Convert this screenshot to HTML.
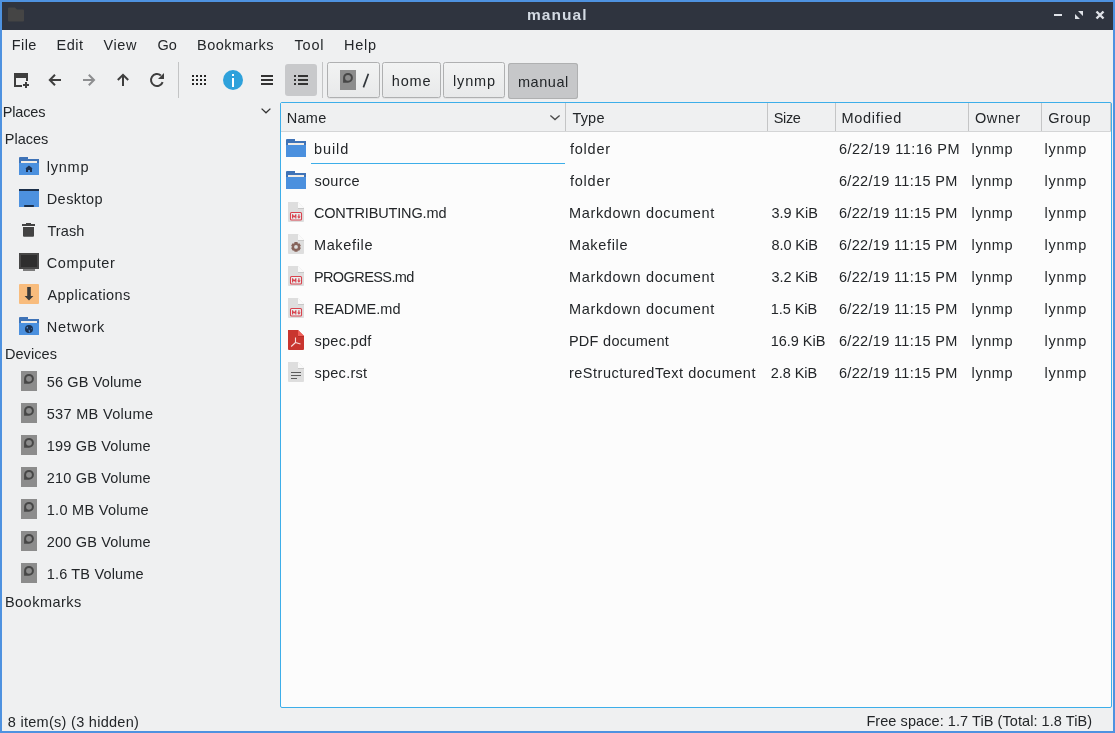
<!DOCTYPE html>
<html><head><meta charset="utf-8">
<style>
html,body{margin:0;padding:0;width:1115px;height:733px;overflow:hidden;background:#4e92e0}
body{position:relative;font-family:"Liberation Sans",sans-serif;font-size:14.5px}
.a{position:absolute}
.t{position:absolute;white-space:pre;line-height:20px;height:20px;font-family:"Liberation Sans",sans-serif;font-size:14.5px}
svg{position:absolute;overflow:visible}
</style></head><body>
<!-- window -->
<div class="a" style="left:2px;top:2px;width:1111px;height:28px;background:#2f343f"></div>
<div class="a" style="left:2px;top:30px;width:1111px;height:701px;background:#eff0f1"></div>
<!-- toolbar separators -->
<div class="a" style="left:178px;top:62px;width:1px;height:36px;background:#c3c4c5"></div>
<div class="a" style="left:322px;top:62px;width:1px;height:36px;background:#c3c4c5"></div>
<!-- checked view button -->
<div class="a" style="left:285px;top:64px;width:32px;height:32px;background:#c8c9cb;border-radius:3px"></div>
<!-- breadcrumb buttons -->
<div class="a bc" style="left:327px;top:62px;width:51px;height:34px"></div>
<div class="a bc" style="left:382px;top:62px;width:57px;height:34px"></div>
<div class="a bc" style="left:443px;top:62px;width:60px;height:34px"></div>
<div class="a" style="left:508px;top:63px;width:70px;height:36px;background:#c6c7c9;border-radius:3px;box-shadow:inset 0 0 0 1px #afb0b1"></div>
<style>.bc{background:linear-gradient(#f2f3f3,#e8e9ea);border:1px solid #afb0b1;border-radius:2.5px;box-shadow:0 1px 0 rgba(0,0,0,0.05)}</style>
<!-- file view frame -->
<div class="a" style="left:280px;top:102px;width:830px;height:604px;border:1px solid #3daee9;border-radius:2px;background:#fcfcfc"></div>
<div class="a" style="left:281px;top:103px;width:830px;height:28px;background:#eff0f1;border-bottom:1px solid #d4d5d6"></div>
<div class="a" style="left:565px;top:103px;width:1px;height:28px;background:#c4c5c6"></div>
<div class="a" style="left:767px;top:103px;width:1px;height:28px;background:#c4c5c6"></div>
<div class="a" style="left:835px;top:103px;width:1px;height:28px;background:#c4c5c6"></div>
<div class="a" style="left:968px;top:103px;width:1px;height:28px;background:#c4c5c6"></div>
<div class="a" style="left:1041px;top:103px;width:1px;height:28px;background:#c4c5c6"></div>
<div class="a" style="left:1110px;top:103px;width:1px;height:28px;background:#c4c5c6"></div>
<!-- focus underline -->
<div class="a" style="left:311px;top:163px;width:254px;height:1px;background:#3daee9"></div>
<svg style="left:0;top:0" width="1115" height="733" viewBox="0 0 1115 733">
<path d="M8 8.5a1 1 0 0 1 1-1h6l2 2h6a1 1 0 0 1 1 1v10a1 1 0 0 1-1 1H9a1 1 0 0 1-1-1z" fill="#454545"/>
<rect x="1054" y="14" width="8" height="2" fill="#dfe2e8"/>
<path d="M1078 11h5v5z M1075 14v5h5z" fill="#dfe2e8"/>
<path d="M1096.5 11.5l7 7 M1103.5 11.5l-7 7" stroke="#dfe2e8" stroke-width="2.4"/>
<path d="M14 73h14v8h-2v-3h-10v7h6v2h-8z" fill="#3e3e3e"/>
<path d="M23 84h6v2h-6z M25 82h2v6h-2z" fill="#3e3e3e"/>
<path d="M55 74.8l-5.2 5.2 5.2 5.2 M50.5 80H61" stroke="#3e3e3e" stroke-width="2" fill="none"/>
<path d="M88.8 74.8l5.2 5.2 -5.2 5.2 M83 80h10.5" stroke="#8d8e90" stroke-width="2" fill="none"/>
<path d="M117.8 80l5.2 -5.2 5.2 5.2 M123 75.5V86" stroke="#3e3e3e" stroke-width="2" fill="none"/>
<path d="M160.86 75.4A6 6 0 1 0 162.64 82.05" stroke="#3e3e3e" stroke-width="2" fill="none"/>
<path d="M164 73v6h-6z" fill="#3e3e3e"/>
<path d="M192 75h2v2h-2zM192 79h2v2h-2zM192 83h2v2h-2zM196 75h2v2h-2zM196 79h2v2h-2zM196 83h2v2h-2zM200 75h2v2h-2zM200 79h2v2h-2zM200 83h2v2h-2zM204 75h2v2h-2zM204 79h2v2h-2zM204 83h2v2h-2z" fill="#252525"/>
<circle cx="233" cy="80" r="10" fill="#2ea1db"/>
<path d="M232 74h2v2h-2z M232 78h2v9h-2z" fill="#fff"/>
<path d="M261 75h12v2h-12z M261 79h12v2h-12z M261 83h12v2h-12z" fill="#333"/>
<path d="M294 75h2v2h-2z M294 79h2v2h-2z M294 83h2v2h-2z M298 75h10v2h-10z M298 79h10v2h-10z M298 83h10v2h-10z" fill="#333"/>
<rect x="340" y="70" width="16" height="20" fill="#8c8c8c"/>
<path d="M343.10 82.70V77.8A4.9 4.9 0 1 1 348 82.70Z M350.9 77.8A2.9 2.9 0 1 0 345.1 77.8A2.9 2.9 0 1 0 350.9 77.8Z" fill="#474747" fill-rule="evenodd"/>
<path d="M368.4 73.8L363.4 87.4" stroke="#31363b" stroke-width="1.7"/>
<path d="M261.6 108.6l4.4 4.2 4.4-4.2" stroke="#333" stroke-width="1.3" fill="none"/>
<path d="M550.4 115.4l4.6 4.2 4.6-4.2" stroke="#4a4a4a" stroke-width="1.3" fill="none"/>
<path d="M19 158a1 1 0 0 1 1-1h8v2h11v6h-20z" fill="#3f73b7"/>
<rect x="21" y="161" width="16" height="2" fill="#f1ece6"/>
<rect x="19" y="163" width="20" height="12" fill="#4b90de"/>
<path d="M25.3 168.5L29 165.5L32.7 168.5H32V172H30V170H28V172H26V168.5Z" fill="#1c3252"/>
<rect x="19" y="189" width="20" height="18" fill="#4d91df"/><rect x="19" y="189" width="20" height="2" fill="#1b2f4a"/><rect x="24" y="205" width="10" height="2" rx="0.8" fill="#1b2f4a"/>
<rect x="26" y="223" width="5" height="1.5" fill="#434343"/><rect x="22" y="224" width="13" height="2" fill="#434343"/><path d="M23 227h11v8.7a1 1 0 0 1 -1 1h-9a1 1 0 0 1 -1 -1z" fill="#434343"/>
<rect x="19" y="253" width="20" height="16" fill="#474747"/><rect x="21" y="255" width="16" height="12" fill="#2e2e2e"/><rect x="23" y="269" width="12" height="2" fill="#7b7b7b"/>
<rect x="19" y="284" width="20" height="20" rx="1" fill="#f8bc7d"/><rect x="27.2" y="287" width="3.6" height="9.5" fill="#3b3b3b"/><path d="M24.6 296h8.8l-4.4 4.6z" fill="#3b3b3b"/>
<path d="M19 318a1 1 0 0 1 1-1h8v2h11v6h-20z" fill="#3f73b7"/>
<rect x="21" y="321" width="16" height="2" fill="#f1ece6"/>
<rect x="19" y="323" width="20" height="12" fill="#4b90de"/>
<circle cx="29" cy="329" r="4" fill="#1c3252"/>
<path d="M27 326.5q1.5 0.5 1 2q-1 0.3 -1.5 -0.5z M28.7 329.5q1.2 0 1.3 1.5l-0.5 1.8q-1.2 -1 -0.8 -3.3z M31.3 327.7q0.8 0.6 0.7 1.6l-0.8 -0.4z" fill="#4d8fd8"/>
<rect x="21" y="371" width="16" height="20" fill="#8c8c8c"/>
<path d="M24.10 383.70V378.8A4.9 4.9 0 1 1 29 383.70Z M31.9 378.8A2.9 2.9 0 1 0 26.1 378.8A2.9 2.9 0 1 0 31.9 378.8Z" fill="#474747" fill-rule="evenodd"/>
<rect x="21" y="403" width="16" height="20" fill="#8c8c8c"/>
<path d="M24.10 415.70V410.8A4.9 4.9 0 1 1 29 415.70Z M31.9 410.8A2.9 2.9 0 1 0 26.1 410.8A2.9 2.9 0 1 0 31.9 410.8Z" fill="#474747" fill-rule="evenodd"/>
<rect x="21" y="435" width="16" height="20" fill="#8c8c8c"/>
<path d="M24.10 447.70V442.8A4.9 4.9 0 1 1 29 447.70Z M31.9 442.8A2.9 2.9 0 1 0 26.1 442.8A2.9 2.9 0 1 0 31.9 442.8Z" fill="#474747" fill-rule="evenodd"/>
<rect x="21" y="467" width="16" height="20" fill="#8c8c8c"/>
<path d="M24.10 479.70V474.8A4.9 4.9 0 1 1 29 479.70Z M31.9 474.8A2.9 2.9 0 1 0 26.1 474.8A2.9 2.9 0 1 0 31.9 474.8Z" fill="#474747" fill-rule="evenodd"/>
<rect x="21" y="499" width="16" height="20" fill="#8c8c8c"/>
<path d="M24.10 511.70V506.8A4.9 4.9 0 1 1 29 511.70Z M31.9 506.8A2.9 2.9 0 1 0 26.1 506.8A2.9 2.9 0 1 0 31.9 506.8Z" fill="#474747" fill-rule="evenodd"/>
<rect x="21" y="531" width="16" height="20" fill="#8c8c8c"/>
<path d="M24.10 543.70V538.8A4.9 4.9 0 1 1 29 543.70Z M31.9 538.8A2.9 2.9 0 1 0 26.1 538.8A2.9 2.9 0 1 0 31.9 538.8Z" fill="#474747" fill-rule="evenodd"/>
<rect x="21" y="563" width="16" height="20" fill="#8c8c8c"/>
<path d="M24.10 575.70V570.8A4.9 4.9 0 1 1 29 575.70Z M31.9 570.8A2.9 2.9 0 1 0 26.1 570.8A2.9 2.9 0 1 0 31.9 570.8Z" fill="#474747" fill-rule="evenodd"/>
<path d="M286 140a1 1 0 0 1 1-1h8v2h11v6h-20z" fill="#3f73b7"/>
<rect x="288" y="143" width="16" height="2" fill="#f1ece6"/>
<rect x="286" y="145" width="20" height="12" fill="#4b90de"/>
<path d="M286 172a1 1 0 0 1 1-1h8v2h11v6h-20z" fill="#3f73b7"/>
<rect x="288" y="175" width="16" height="2" fill="#f1ece6"/>
<rect x="286" y="177" width="20" height="12" fill="#4b90de"/>
<path d="M288 202h10l6 6v13a1 1 0 0 1 -1 1h-14a1 1 0 0 1 -1 -1z" fill="#dedede"/>
<path d="M298 202l6 6h-6z" fill="#fafafa"/>
<rect x="298" y="208" width="6" height="1" fill="#c8c8c8"/>
<rect x="290.5" y="212.5" width="11" height="7.5" rx="1" fill="#e8f1f1" stroke="#d9434e" stroke-width="1.1"/>
<path d="M292.6 218.5v-4.3 M295.8 218.5v-4.3 M292.6 215.2l1.6 1.6 1.6-1.6 M298.9 214.2v3" stroke="#d9434e" stroke-width="1.2" fill="none"/>
<path d="M297.1 216.6h3.6l-1.8 2.2z" fill="#d9434e"/>
<path d="M288 234h10l6 6v13a1 1 0 0 1 -1 1h-14a1 1 0 0 1 -1 -1z" fill="#dedede"/>
<path d="M298 234l6 6h-6z" fill="#fafafa"/>
<rect x="298" y="240" width="6" height="1" fill="#c8c8c8"/>
<path d="M300.88 248.01 L299.40 250.57 L297.76 250.15 L297.93 250.05 L297.48 251.68 L294.52 251.68 L294.07 250.05 L294.24 250.15 L292.60 250.57 L291.12 248.01 L292.30 246.80 L292.30 247.00 L291.12 245.79 L292.60 243.23 L294.24 243.65 L294.07 243.75 L294.52 242.12 L297.48 242.12 L297.93 243.75 L297.76 243.65 L299.40 243.23 L300.88 245.79 L299.70 247.00 L299.70 246.80Z M297.9 246.9A1.9 1.9 0 1 0 294.1 246.9A1.9 1.9 0 1 0 297.9 246.9Z" fill="#86635a" fill-rule="evenodd"/>
<path d="M288 266h10l6 6v13a1 1 0 0 1 -1 1h-14a1 1 0 0 1 -1 -1z" fill="#dedede"/>
<path d="M298 266l6 6h-6z" fill="#fafafa"/>
<rect x="298" y="272" width="6" height="1" fill="#c8c8c8"/>
<rect x="290.5" y="276.5" width="11" height="7.5" rx="1" fill="#e8f1f1" stroke="#d9434e" stroke-width="1.1"/>
<path d="M292.6 282.5v-4.3 M295.8 282.5v-4.3 M292.6 279.2l1.6 1.6 1.6-1.6 M298.9 278.2v3" stroke="#d9434e" stroke-width="1.2" fill="none"/>
<path d="M297.1 280.6h3.6l-1.8 2.2z" fill="#d9434e"/>
<path d="M288 298h10l6 6v13a1 1 0 0 1 -1 1h-14a1 1 0 0 1 -1 -1z" fill="#dedede"/>
<path d="M298 298l6 6h-6z" fill="#fafafa"/>
<rect x="298" y="304" width="6" height="1" fill="#c8c8c8"/>
<rect x="290.5" y="308.5" width="11" height="7.5" rx="1" fill="#e8f1f1" stroke="#d9434e" stroke-width="1.1"/>
<path d="M292.6 314.5v-4.3 M295.8 314.5v-4.3 M292.6 311.2l1.6 1.6 1.6-1.6 M298.9 310.2v3" stroke="#d9434e" stroke-width="1.2" fill="none"/>
<path d="M297.1 312.6h3.6l-1.8 2.2z" fill="#d9434e"/>
<path d="M288 330h10l6 6v13a1 1 0 0 1 -1 1h-14a1 1 0 0 1 -1 -1z" fill="#c9352f"/>
<path d="M298 330l6 6h-6z" fill="#ef5f59"/>
<rect x="298" y="336" width="6" height="1" fill="#b52d28"/>
<path d="M295.5 337.5v5 M295.5 342.5l-4.3 4 M295.5 342.5l5 1.6" stroke="#f7dddc" stroke-width="1.1" fill="none"/>
<path d="M288 362h10l6 6v13a1 1 0 0 1 -1 1h-14a1 1 0 0 1 -1 -1z" fill="#dedede"/>
<path d="M298 362l6 6h-6z" fill="#fafafa"/>
<rect x="298" y="368" width="6" height="1" fill="#c8c8c8"/>
<path d="M291 372.5h10 M291 375.5h10 M291 378.5h6" stroke="#5c5c5c" stroke-width="1.1"/>
</svg>
<div style="position:absolute;left:0;top:0;width:1115px;height:733px;will-change:transform"><div class="t" style="left:527px;top:4.6px;font-weight:700;letter-spacing:1.05px;color:#d3dae3;font-size:15.5px">manual</div>
<div class="t" id="t0" style="left:11.80px;top:34.8px;letter-spacing:0.380px;color:#232629">File</div>
<div class="t" id="t1" style="left:56.60px;top:34.8px;letter-spacing:0.509px;color:#232629">Edit</div>
<div class="t" id="t2" style="left:103.60px;top:34.8px;letter-spacing:0.567px;color:#232629">View</div>
<div class="t" id="t3" style="left:157.40px;top:34.8px;letter-spacing:0.000px;color:#232629">Go</div>
<div class="t" id="t4" style="left:197.00px;top:34.8px;letter-spacing:0.487px;color:#232629">Bookmarks</div>
<div class="t" id="t5" style="left:294.56px;top:34.8px;letter-spacing:0.807px;color:#232629">Tool</div>
<div class="t" id="t6" style="left:344.00px;top:34.8px;letter-spacing:0.708px;color:#232629">Help</div>
<div class="t" id="t7" style="left:391.70px;top:70.8px;letter-spacing:0.904px;color:#232629">home</div>
<div class="t" id="t8" style="left:452.90px;top:70.8px;letter-spacing:0.898px;color:#232629">lynmp</div>
<div class="t" id="t9" style="left:517.90px;top:71.7px;letter-spacing:0.560px;color:#232629">manual</div>
<div class="t" id="t10" style="left:2.70px;top:102.0px;letter-spacing:-0.133px;color:#232629">Places</div>
<div class="t" id="t11" style="left:4.80px;top:128.7px;letter-spacing:-0.005px;color:#232629">Places</div>
<div class="t" id="t12" style="left:46.70px;top:156.6px;letter-spacing:0.778px;color:#232629">lynmp</div>
<div class="t" id="t13" style="left:46.70px;top:188.6px;letter-spacing:0.455px;color:#232629">Desktop</div>
<div class="t" id="t14" style="left:47.40px;top:220.6px;letter-spacing:0.109px;color:#232629">Trash</div>
<div class="t" id="t15" style="left:46.70px;top:252.6px;letter-spacing:0.639px;color:#232629">Computer</div>
<div class="t" id="t16" style="left:47.40px;top:284.6px;letter-spacing:0.430px;color:#232629">Applications</div>
<div class="t" id="t17" style="left:46.70px;top:316.6px;letter-spacing:0.737px;color:#232629">Network</div>
<div class="t" id="t18" style="left:4.90px;top:344.2px;letter-spacing:0.093px;color:#232629">Devices</div>
<div class="t" id="t19" style="left:46.70px;top:372.0px;letter-spacing:0.143px;color:#232629">56 GB Volume</div>
<div class="t" id="t20" style="left:46.70px;top:404.0px;letter-spacing:0.327px;color:#232629">537 MB Volume</div>
<div class="t" id="t21" style="left:46.70px;top:436.0px;letter-spacing:0.189px;color:#232629">199 GB Volume</div>
<div class="t" id="t22" style="left:46.70px;top:468.0px;letter-spacing:0.189px;color:#232629">210 GB Volume</div>
<div class="t" id="t23" style="left:46.70px;top:500.0px;letter-spacing:0.299px;color:#232629">1.0 MB Volume</div>
<div class="t" id="t24" style="left:46.70px;top:532.0px;letter-spacing:0.189px;color:#232629">200 GB Volume</div>
<div class="t" id="t25" style="left:46.70px;top:564.0px;letter-spacing:0.174px;color:#232629">1.6 TB Volume</div>
<div class="t" id="t26" style="left:4.90px;top:591.7px;letter-spacing:0.487px;color:#232629">Bookmarks</div>
<div class="t" id="t27" style="left:286.70px;top:108.0px;letter-spacing:0.284px;color:#232629">Name</div>
<div class="t" id="t28" style="left:572.40px;top:108.0px;letter-spacing:0.207px;color:#232629">Type</div>
<div class="t" id="t29" style="left:773.80px;top:108.0px;letter-spacing:-0.379px;color:#232629">Size</div>
<div class="t" id="t30" style="left:841.50px;top:108.0px;letter-spacing:0.701px;color:#232629">Modified</div>
<div class="t" id="t31" style="left:974.90px;top:108.0px;letter-spacing:0.628px;color:#232629">Owner</div>
<div class="t" id="t32" style="left:1048.22px;top:108.0px;letter-spacing:0.519px;color:#232629">Group</div>
<div class="t" id="t33" style="left:313.90px;top:139.0px;letter-spacing:0.928px;color:#232629">build</div>
<div class="t" id="t34" style="left:569.88px;top:139.0px;letter-spacing:0.783px;color:#232629">folder</div>
<div class="t" id="t35" style="left:838.90px;top:139.0px;letter-spacing:0.486px;color:#232629">6/22/19 11:16 PM</div>
<div class="t" id="t36" style="left:971.60px;top:139.0px;letter-spacing:0.578px;color:#232629">lynmp</div>
<div class="t" id="t37" style="left:1044.50px;top:139.0px;letter-spacing:0.778px;color:#232629">lynmp</div>
<div class="t" id="t38" style="left:314.39px;top:171.0px;letter-spacing:0.331px;color:#232629">source</div>
<div class="t" id="t39" style="left:569.88px;top:171.0px;letter-spacing:0.783px;color:#232629">folder</div>
<div class="t" id="t40" style="left:838.90px;top:171.0px;letter-spacing:0.337px;color:#232629">6/22/19 11:15 PM</div>
<div class="t" id="t41" style="left:971.60px;top:171.0px;letter-spacing:0.578px;color:#232629">lynmp</div>
<div class="t" id="t42" style="left:1044.50px;top:171.0px;letter-spacing:0.778px;color:#232629">lynmp</div>
<div class="t" id="t43" style="left:313.90px;top:203.0px;letter-spacing:-0.139px;color:#232629">CONTRIBUTING.md</div>
<div class="t" id="t44" style="left:568.90px;top:203.0px;letter-spacing:0.676px;color:#232629">Markdown document</div>
<div class="t" id="t45" style="left:771.40px;top:203.0px;letter-spacing:-0.051px;color:#232629">3.9 KiB</div>
<div class="t" id="t46" style="left:838.90px;top:203.0px;letter-spacing:0.337px;color:#232629">6/22/19 11:15 PM</div>
<div class="t" id="t47" style="left:971.60px;top:203.0px;letter-spacing:0.578px;color:#232629">lynmp</div>
<div class="t" id="t48" style="left:1044.50px;top:203.0px;letter-spacing:0.778px;color:#232629">lynmp</div>
<div class="t" id="t49" style="left:313.90px;top:235.0px;letter-spacing:0.665px;color:#232629">Makefile</div>
<div class="t" id="t50" style="left:568.90px;top:235.0px;letter-spacing:0.665px;color:#232629">Makefile</div>
<div class="t" id="t51" style="left:771.40px;top:235.0px;letter-spacing:-0.051px;color:#232629">8.0 KiB</div>
<div class="t" id="t52" style="left:838.90px;top:235.0px;letter-spacing:0.337px;color:#232629">6/22/19 11:15 PM</div>
<div class="t" id="t53" style="left:971.60px;top:235.0px;letter-spacing:0.578px;color:#232629">lynmp</div>
<div class="t" id="t54" style="left:1044.50px;top:235.0px;letter-spacing:0.778px;color:#232629">lynmp</div>
<div class="t" id="t55" style="left:313.90px;top:267.0px;letter-spacing:-0.585px;color:#232629">PROGRESS.md</div>
<div class="t" id="t56" style="left:568.90px;top:267.0px;letter-spacing:0.676px;color:#232629">Markdown document</div>
<div class="t" id="t57" style="left:771.40px;top:267.0px;letter-spacing:-0.051px;color:#232629">3.2 KiB</div>
<div class="t" id="t58" style="left:838.90px;top:267.0px;letter-spacing:0.337px;color:#232629">6/22/19 11:15 PM</div>
<div class="t" id="t59" style="left:971.60px;top:267.0px;letter-spacing:0.578px;color:#232629">lynmp</div>
<div class="t" id="t60" style="left:1044.50px;top:267.0px;letter-spacing:0.778px;color:#232629">lynmp</div>
<div class="t" id="t61" style="left:313.90px;top:299.0px;letter-spacing:0.051px;color:#232629">README.md</div>
<div class="t" id="t62" style="left:568.90px;top:299.0px;letter-spacing:0.676px;color:#232629">Markdown document</div>
<div class="t" id="t63" style="left:770.70px;top:299.0px;letter-spacing:-0.051px;color:#232629">1.5 KiB</div>
<div class="t" id="t64" style="left:838.90px;top:299.0px;letter-spacing:0.337px;color:#232629">6/22/19 11:15 PM</div>
<div class="t" id="t65" style="left:971.60px;top:299.0px;letter-spacing:0.578px;color:#232629">lynmp</div>
<div class="t" id="t66" style="left:1044.50px;top:299.0px;letter-spacing:0.778px;color:#232629">lynmp</div>
<div class="t" id="t67" style="left:314.39px;top:331.0px;letter-spacing:0.316px;color:#232629">spec.pdf</div>
<div class="t" id="t68" style="left:568.90px;top:331.0px;letter-spacing:0.290px;color:#232629">PDF document</div>
<div class="t" id="t69" style="left:770.70px;top:331.0px;letter-spacing:-0.018px;color:#232629">16.9 KiB</div>
<div class="t" id="t70" style="left:838.90px;top:331.0px;letter-spacing:0.337px;color:#232629">6/22/19 11:15 PM</div>
<div class="t" id="t71" style="left:971.60px;top:331.0px;letter-spacing:0.578px;color:#232629">lynmp</div>
<div class="t" id="t72" style="left:1044.50px;top:331.0px;letter-spacing:0.778px;color:#232629">lynmp</div>
<div class="t" id="t73" style="left:314.39px;top:363.0px;letter-spacing:0.287px;color:#232629">spec.rst</div>
<div class="t" id="t74" style="left:568.90px;top:363.0px;letter-spacing:0.521px;color:#232629">reStructuredText document</div>
<div class="t" id="t75" style="left:770.70px;top:363.0px;letter-spacing:-0.051px;color:#232629">2.8 KiB</div>
<div class="t" id="t76" style="left:838.90px;top:363.0px;letter-spacing:0.337px;color:#232629">6/22/19 11:15 PM</div>
<div class="t" id="t77" style="left:971.60px;top:363.0px;letter-spacing:0.578px;color:#232629">lynmp</div>
<div class="t" id="t78" style="left:1044.50px;top:363.0px;letter-spacing:0.778px;color:#232629">lynmp</div>
<div class="t" id="t79" style="left:7.73px;top:711.5px;letter-spacing:0.288px;color:#232629">8 item(s) (3 hidden)</div>
<div class="t" id="t80" style="left:866.40px;top:711.3px;letter-spacing:0.070px;color:#232629">Free space: 1.7 TiB (Total: 1.8 TiB)</div></div>
</body></html>
